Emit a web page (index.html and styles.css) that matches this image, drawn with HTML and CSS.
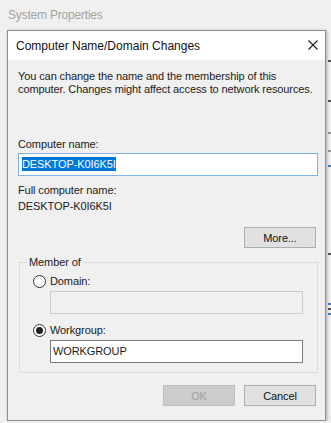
FILE: index.html
```html
<!DOCTYPE html>
<html>
<head>
    <meta charset="UTF-8">
    <title>Computer Name/Domain Changes</title>
    <link rel="stylesheet" href="styles.css">
</head>
<body>
    <div class="window-title">System Properties</div>

    <!-- bits of the window behind the dialog -->
    <div class="behind">
        <span class="mark dark" style="top: 40px"></span>
        <span class="mark dark" style="top: 80px"></span>
        <span class="mark gray" style="top: 112px"></span>
        <span class="mark gray" style="top: 130px"></span>
        <span class="mark blue" style="top: 145px"></span>
        <span class="mark dark" style="top: 233px"></span>
        <span class="mark blue" style="top: 283px"></span>
        <span class="mark dark" style="top: 288px"></span>
        <span class="mark blue" style="top: 293px"></span>
    </div>

    <div class="dialog">
        <div class="titlebar">
            <span class="title">Computer Name/Domain Changes</span>
            <svg class="close" width="10" height="10" viewBox="0 0 10 10">
                <path d="M0.5 0.5 L9.5 9.5 M9.5 0.5 L0.5 9.5" stroke="#1e1e1e" stroke-width="1.1" fill="none"/>
            </svg>
        </div>
        <div class="content">
            <p class="intro">You can change the name and the membership of this<br>computer. Changes might affect access to network resources.</p>

            <label class="field-label">Computer name:</label>
            <div class="textbox focused"><span class="selected">DESKTOP-K0I6K5I</span></div>

            <div class="field-label full">Full computer name:</div>
            <div class="full-name">DESKTOP-K0I6K5I</div>

            <div class="row-right more-row">
                <button class="btn">More...</button>
            </div>

            <fieldset class="group">
                <legend>Member of</legend>
                <div class="radio-row">
                    <span class="radio"></span>
                    <span>Domain:</span>
                </div>
                <div class="textbox disabled"></div>
                <div class="radio-row second">
                    <span class="radio checked"></span>
                    <span>Workgroup:</span>
                </div>
                <div class="textbox">WORKGROUP</div>
            </fieldset>

            <div class="row-right buttons">
                <button class="btn btn-disabled">OK</button>
                <button class="btn">Cancel</button>
            </div>
        </div>
    </div>
</body>
</html>
```
FILE: styles.css
```css
body {
    margin: 0;
    background-color: #f0f0f0;
    font-family: "Liberation Sans", Arial, sans-serif;
    font-size: 11px;
    letter-spacing: -0.1px;
    color: #1a1a1a;
    overflow: hidden;
}

.window-title {
    height: 30px;
    padding-left: 8px;
    line-height: 30px;
    color: #a2a2a2;
    font-size: 12px;
    letter-spacing: -0.2px;
}

.behind {
    position: absolute;
    top: 20px;
    left: 327px;
    width: 4px;
    height: 403px;
}

.mark {
    position: absolute;
    left: 1px;
    width: 3px;
    height: 2px;
}

.mark.dark {
    background-color: #555;
}

.mark.gray {
    background-color: #999;
}

.mark.blue {
    background-color: #3f86d0;
}

.dialog {
    position: relative;
    width: 317px;
    height: 389px;
    margin-left: 7px;
    border: 1px solid #8e8e8e;
    background-color: #f0f0f0;
    box-shadow: 1px 1px 3px rgba(0, 0, 0, 0.3);
}

.titlebar {
    height: 29px;
    background-color: #ffffff;
    display: flex;
    align-items: center;
    justify-content: space-between;
    padding: 0 7px 0 8px;
}

.title {
    font-size: 12px;
    letter-spacing: 0;
    color: #111;
}

.close {
    margin-top: -1px;
}

.content {
    padding: 10px 7px 0 10px;
}

.intro {
    margin: 0;
    line-height: 13px;
    color: #222;
    white-space: nowrap;
}

.field-label {
    display: block;
    margin-top: 40px;
    height: 16px;
    line-height: 16px;
}

.field-label.full {
    margin-top: 6px;
}

.textbox {
    height: 21px;
    margin-top: 1px;
    border: 1px solid #7a7a7a;
    background-color: #fff;
    padding: 0 3px;
    line-height: 21px;
}

.textbox.focused {
    border-color: #7eb4ea;
}

.selected {
    background-color: #0078d7;
    color: #fff;
    padding: 1px 0;
}

.disabled {
    border-color: #cccccc;
    background-color: #f0f0f0;
}

.full-name {
    height: 16px;
    line-height: 16px;
}

.row-right {
    display: flex;
    justify-content: flex-end;
    gap: 9px;
    padding-right: 2px;
}

.more-row {
    margin-top: 13px;
}

.btn {
    width: 72px;
    height: 21px;
    padding: 0;
    background-color: #e1e1e1;
    border: 1px solid #adadad;
    font-family: inherit;
    font-size: 11px;
    letter-spacing: -0.1px;
    color: #111;
}

.btn-disabled {
    background-color: #cccccc;
    border-color: #bfbfbf;
    color: #a0a0a0;
}

.group {
    margin: 6px 0 0 1px;
    padding: 3px 14px 9px 13px;
    border: 1px solid #dcdcdc;
}

.group legend {
    padding: 0 2px;
    margin-left: -6px;
    height: 16px;
    line-height: 16px;
}

.radio-row {
    display: flex;
    align-items: center;
    gap: 4px;
    height: 16px;
}

.radio-row.second {
    margin-top: 8px;
}

.group .textbox {
    margin: 2px 0 0 17px;
    padding: 0 2px;
}

.radio {
    width: 11px;
    height: 11px;
    border: 1px solid #333;
    border-radius: 50%;
    background-color: #fff;
    position: relative;
}

.radio.checked::after {
    content: "";
    position: absolute;
    left: 2px;
    top: 2px;
    width: 7px;
    height: 7px;
    border-radius: 50%;
    background-color: #222;
}

.buttons {
    margin-top: 12px;
}
```
